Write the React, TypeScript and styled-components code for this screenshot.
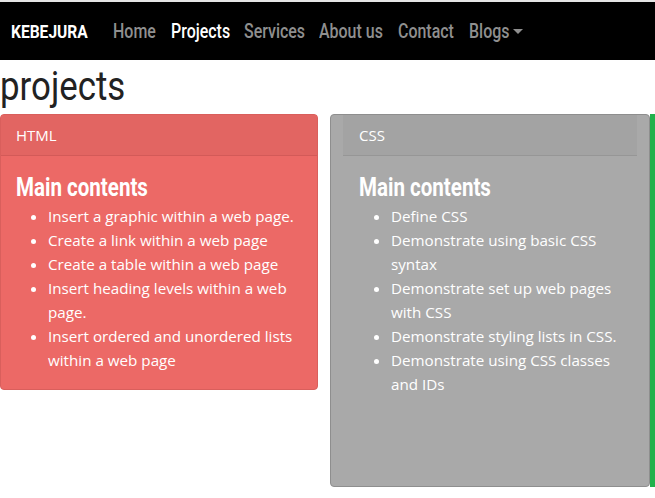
import type { ReactNode } from 'react';
import styled, { createGlobalStyle } from 'styled-components';

const GlobalStyle = createGlobalStyle`
	html, body {
		margin: 0;
		padding: 0;
		background: #fff;
		overflow: hidden;
	}
	body {
		font-family: "Open Sans", "Noto Sans", sans-serif;
		color: #212529;
	}
`;

// no condensed face is installed, so the narrow heading type is squeezed from Roboto
const condensed = `"Roboto", "Liberation Sans", sans-serif`;

const SqueezeBox = styled.span<{ $w: number }>`
	display: inline-block;
	width: ${(p) => p.$w}px;
	white-space: nowrap;
	overflow: visible;
`;

const SqueezeText = styled.span<{ $k: number }>`
	display: inline-block;
	transform: scaleX(${(p) => p.$k});
	transform-origin: 0 50%;
`;

const Squeeze = ({ w, k, children }: { w: number; k: number; children: ReactNode }) => (
	<SqueezeBox $w={w}>
		<SqueezeText $k={k}>{children}</SqueezeText>
	</SqueezeBox>
);

const Page = styled.div`
	width: 655px;
	height: 498px;
	overflow: hidden;
	border-top: 2px solid #e4e4e4;
	box-sizing: border-box;
`;

const Navbar = styled.nav`
	display: flex;
	align-items: center;
	height: 58px;
	background: #000;
	padding: 0 11px;
	gap: 16px;
`;

const Brand = styled.a`
	font-family: ${condensed};
	font-weight: 700;
	font-size: 19px;
	color: #fff;
	margin-right: 8px;
`;

const NavLink = styled.a<{ $active?: boolean }>`
	font-family: ${condensed};
	font-weight: 500;
	font-size: 21px;
	color: ${(p) => (p.$active ? '#fff' : '#8f8f8f')};
	display: flex;
	align-items: center;
	gap: 5px;
`;

const Caret = styled.span`
	width: 0;
	height: 0;
	border-left: 5px solid transparent;
	border-right: 5px solid transparent;
	border-top: 5px solid #8f8f8f;
	margin-top: 1px;
`;

const Title = styled.h1`
	font-family: ${condensed};
	font-weight: 400;
	font-size: 41px;
	line-height: 50px;
	color: #222;
	margin: 1px 0 3px;
`;

const CardRow = styled.div`
	display: flex;
	align-items: flex-start;
	gap: 12px;
`;

const Card = styled.div<{ $bg: string; $border: string; $width: number; $height: number }>`
	flex: 0 0 auto;
	width: ${(p) => p.$width}px;
	height: ${(p) => p.$height}px;
	box-sizing: border-box;
	background: ${(p) => p.$bg};
	border: 1px solid ${(p) => p.$border};
	border-radius: 4px;
	color: #fff;
`;

const CardHeader = styled.div<{ $bg: string; $line: string; $inset?: boolean }>`
	background: ${(p) => p.$bg};
	border-bottom: 1px solid ${(p) => p.$line};
	margin: 0 ${(p) => (p.$inset ? '12px' : '0')};
	padding: 0 ${(p) => (p.$inset ? '16px' : '15px')};
	height: 40px;
	display: flex;
	align-items: center;
	font-size: 15px;
`;

const CardBody = styled.div<{ $inset?: boolean }>`
	padding: 16px ${(p) => (p.$inset ? '28px' : '15px')} 0;
`;

const Heading = styled.h2`
	font-family: ${condensed};
	font-weight: 700;
	font-size: 26px;
	line-height: 30px;
	margin: 0 0 2px;
`;

const List = styled.ul`
	margin: 0;
	padding-left: 32px;
	font-size: 15.2px;
	line-height: 24px;
`;

const Third = styled.div`
	flex: 0 0 auto;
	width: 40px;
	height: 373px;
	background: #22b14c;
	margin-left: -12px;
`;

const navItems = [
	{ label: 'Home', w: 42 },
	{ label: 'Projects', w: 57, active: true },
	{ label: 'Services', w: 59 },
	{ label: 'About us', w: 63 },
	{ label: 'Contact', w: 55 },
];

const cards = [
	{
		title: 'HTML',
		bg: '#ec6966',
		header: '#e26562',
		line: '#d35a58',
		border: '#d95f5c',
		width: 318,
		height: 276,
		inset: false,
		items: [
			'Insert a graphic within a web page.',
			'Create a link within a web page',
			'Create a table within a web page',
			'Insert heading levels within a web page.',
			'Insert ordered and unordered lists within a web page',
		],
	},
	{
		title: 'CSS',
		bg: '#a9a9a9',
		header: '#a3a3a3',
		line: '#969696',
		border: '#8e8e8e',
		width: 320,
		height: 373,
		inset: true,
		items: [
			'Define CSS',
			'Demonstrate using basic CSS syntax',
			'Demonstrate set up web pages with CSS',
			'Demonstrate styling lists in CSS.',
			'Demonstrate using CSS classes and IDs',
		],
	},
];

const App = () => {
	return (
		<Page>
			<GlobalStyle />
			<Navbar>
				<Brand>
					<Squeeze w={78} k={0.82}>KEBEJURA</Squeeze>
				</Brand>
				{navItems.map((n) => (
					<NavLink key={n.label} $active={n.active}>
						<Squeeze w={n.w} k={0.76}>{n.label}</Squeeze>
					</NavLink>
				))}
				<NavLink>
					<Squeeze w={39} k={0.76}>Blogs</Squeeze>
					<Caret />
				</NavLink>
			</Navbar>
			<Title>
				<Squeeze w={124} k={0.85}>projects</Squeeze>
			</Title>
			<CardRow>
				{cards.map((c) => (
					<Card key={c.title} $bg={c.bg} $border={c.border} $width={c.width} $height={c.height}>
						<CardHeader $bg={c.header} $line={c.line} $inset={c.inset}>
							{c.title}
						</CardHeader>
						<CardBody $inset={c.inset}>
							<Heading>
								<Squeeze w={133} k={0.79}>Main contents</Squeeze>
							</Heading>
							<List>
								{c.items.map((item) => (
									<li key={item}>{item}</li>
								))}
							</List>
						</CardBody>
					</Card>
				))}
				<Third />
			</CardRow>
		</Page>
	);
};

export default App;
